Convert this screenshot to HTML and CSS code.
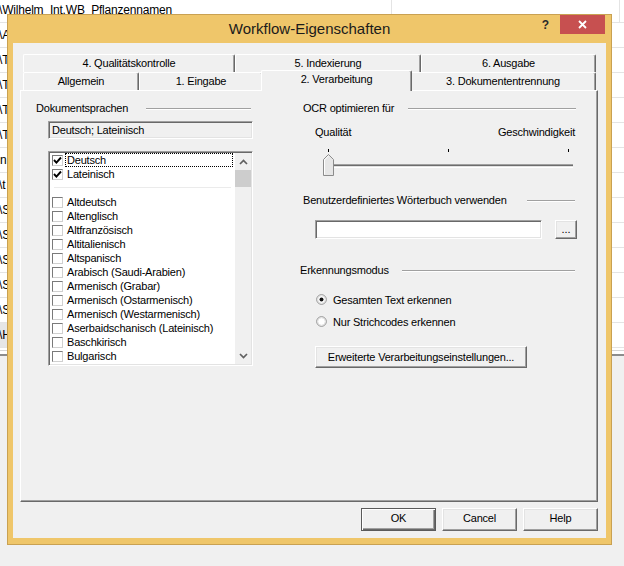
FILE: index.html
```html
<!DOCTYPE html>
<html lang="de">
<head>
<meta charset="utf-8">
<title>Workflow-Eigenschaften</title>
<link rel="stylesheet" href="styles.css">
</head>
<body>
<div class="sheet">
  <div class="rows">
    <div class="row"><div class="c1 hd">\Wilhelm_Int.WB_Pflanzennamen</div><div class="c2 hd"></div><div class="c3"></div></div>
    <div class="row b"><div class="c1">\At</div><div class="c3"></div></div>
    <div class="row b"><div class="c1">\T</div><div class="c3"></div></div>
    <div class="row b"><div class="c1">\T</div><div class="c3"></div></div>
    <div class="row b"><div class="c1">\T</div><div class="c3"></div></div>
    <div class="row b"><div class="c1">\T</div><div class="c3"></div></div>
    <div class="row b"><div class="c1 noind">n</div><div class="c3"></div></div>
    <div class="row b"><div class="c1">\t</div><div class="c3"></div></div>
    <div class="row b"><div class="c1">\S</div><div class="c3"></div></div>
    <div class="row b"><div class="c1">\S</div><div class="c3"></div></div>
    <div class="row b"><div class="c1">\S</div><div class="c3"></div></div>
    <div class="row b"><div class="c1">\S</div><div class="c3"></div></div>
    <div class="row b"><div class="c1">\S</div><div class="c3"></div></div>
    <div class="row b sel"><div class="c1">\H</div><div class="c3"></div></div>
  </div>
  <div class="sheet-line"></div>
</div>

<div class="dialog">
  <div class="titlebar">
    <div class="title">Workflow-Eigenschaften</div>
    <div class="tb-btns">
      <div class="help">?</div>
      <div class="close">
        <svg width="9" height="9" viewBox="0 0 9 9"><path d="M1 1 L8 8 M8 1 L1 8" stroke="#fff" stroke-width="1.8" fill="none"/></svg>
      </div>
    </div>
  </div>

  <div class="client">
    <div class="tabs">
      <div class="tabrow r1">
        <div class="tab">4. Qualitätskontrolle</div>
        <div class="tab">5. Indexierung</div>
        <div class="tab">6. Ausgabe</div>
      </div>
      <div class="tabrow r2">
        <div class="tab">Allgemein</div>
        <div class="tab">1. Eingabe</div>
        <div class="tab sel">2. Verarbeitung</div>
        <div class="tab">3. Dokumententrennung</div>
      </div>
    </div>

    <div class="panel">
      <div class="col-left">
        <div class="ghead"><span>Dokumentsprachen</span><span class="etch e1"></span></div>
        <div class="field sunken">Deutsch; Lateinisch</div>
        <div class="listbox sunken">
          <div class="items">
            <div class="item"><span class="cb"><svg width="9" height="9" viewBox="0 0 9 9"><path d="M1 4 L3.4 6.6 L8 1.5" stroke="#000" stroke-width="1.9" fill="none"/></svg></span><span class="lbl focus">Deutsch</span></div>
            <div class="item"><span class="cb"><svg width="9" height="9" viewBox="0 0 9 9"><path d="M1 4 L3.4 6.6 L8 1.5" stroke="#000" stroke-width="1.9" fill="none"/></svg></span><span class="lbl">Lateinisch</span></div>
            <div class="item sep"><span class="sepline"></span></div>
            <div class="item"><span class="cb"></span><span class="lbl">Altdeutsch</span></div>
            <div class="item"><span class="cb"></span><span class="lbl">Altenglisch</span></div>
            <div class="item"><span class="cb"></span><span class="lbl">Altfranzösisch</span></div>
            <div class="item"><span class="cb"></span><span class="lbl">Altitalienisch</span></div>
            <div class="item"><span class="cb"></span><span class="lbl">Altspanisch</span></div>
            <div class="item"><span class="cb"></span><span class="lbl">Arabisch (Saudi-Arabien)</span></div>
            <div class="item"><span class="cb"></span><span class="lbl">Armenisch (Grabar)</span></div>
            <div class="item"><span class="cb"></span><span class="lbl">Armenisch (Ostarmenisch)</span></div>
            <div class="item"><span class="cb"></span><span class="lbl">Armenisch (Westarmenisch)</span></div>
            <div class="item"><span class="cb"></span><span class="lbl">Aserbaidschanisch (Lateinisch)</span></div>
            <div class="item"><span class="cb"></span><span class="lbl">Baschkirisch</span></div>
            <div class="item"><span class="cb"></span><span class="lbl">Bulgarisch</span></div>
          </div>
          <div class="scrollbar">
            <div class="sb-btn"><svg width="9" height="6" viewBox="0 0 9 6"><path d="M1 5 L4.5 1.5 L8 5" stroke="#606060" stroke-width="1.7" fill="none"/></svg></div>
            <div class="sb-thumb"></div>
            <div class="sb-track"></div>
            <div class="sb-btn"><svg width="9" height="6" viewBox="0 0 9 6"><path d="M1 1 L4.5 4.5 L8 1" stroke="#606060" stroke-width="1.7" fill="none"/></svg></div>
          </div>
        </div>
      </div>

      <div class="col-right">
        <div class="ghead ind"><span>OCR optimieren für</span><span class="etch e2"></span></div>
        <div class="scale-labels"><span>Qualität</span><span>Geschwindigkeit</span></div>
        <svg class="slider" width="262" height="33" viewBox="0 0 262 33">
          <rect x="13" y="4" width="1" height="3" fill="#000"/>
          <rect x="133" y="4" width="1" height="3" fill="#000"/>
          <rect x="253" y="4" width="1" height="3" fill="#000"/>
          <rect x="13" y="19" width="245" height="1" fill="#a0a0a0"/>
          <rect x="13" y="20" width="245" height="1" fill="#6d6d6d"/>
          <rect x="13" y="21" width="245" height="1" fill="#e3e3e3"/>
          <rect x="13" y="22" width="245" height="1" fill="#ffffff"/>
          <polygon points="8.5,14.5 13.5,9.5 18.5,14.5 18.5,30.5 8.5,30.5" fill="#e6e6e6" stroke="#8c8c8c" stroke-width="1"/>
          <path d="M9.5 29.5 V14.9 L13.5 10.9" stroke="#fff" stroke-width="1" fill="none"/>
        </svg>
        <div class="ghead ind g2"><span>Benutzerdefiniertes Wörterbuch verwenden</span><span class="etch e3"></span></div>
        <div class="dictrow">
          <div class="input sunken"></div>
          <div class="btn dots">...</div>
        </div>
        <div class="ghead g3"><span>Erkennungsmodus</span><span class="etch e4"></span></div>
        <div class="radio">
          <svg width="11" height="11" viewBox="0 0 11 11"><circle cx="5.5" cy="5.5" r="4.8" fill="#fff" stroke="#8a8a8a"/><circle cx="5.5" cy="5.5" r="3.8" fill="none" stroke="#e0e0e0"/><circle cx="5.5" cy="5.5" r="2" fill="#111"/></svg>
          <span>Gesamten Text erkennen</span>
        </div>
        <div class="radio r2">
          <svg width="11" height="11" viewBox="0 0 11 11"><circle cx="5.5" cy="5.5" r="4.8" fill="#fff" stroke="#8a8a8a"/><circle cx="5.5" cy="5.5" r="3.8" fill="none" stroke="#e0e0e0"/></svg>
          <span>Nur Strichcodes erkennen</span>
        </div>
        <div class="btn wide">Erweiterte Verarbeitungseinstellungen...</div>
      </div>
    </div>

    <div class="footer">
      <div class="btn fbtn default">OK</div>
      <div class="btn fbtn">Cancel</div>
      <div class="btn fbtn">Help</div>
    </div>
  </div>
</div>
</body>
</html>
```
FILE: styles.css
```css
* { box-sizing: border-box; margin: 0; padding: 0; }
html, body { width: 624px; height: 566px; overflow: hidden; }
body {
  position: relative;
  background: #f0f0f0;
  font-family: "Liberation Sans", Arial, sans-serif;
  font-size: 11px;
  color: #000;
}

/* background spreadsheet */
.sheet {
  background: #fff;
  height: 356px;
  border-bottom: 2px solid #8c8c8c;
  overflow: hidden;
}
.rows { margin-top: -2px; }
.row {
  display: grid;
  grid-template-columns: 392px 228px 1fr;
  height: 25px;
  border-bottom: 1px solid #e4e4e4;
  font-size: 12px;
  line-height: 24px;
  letter-spacing: -0.2px;
}
.row.b { grid-template-columns: 7px 1fr; }
.c1 { text-indent: -1px; white-space: nowrap; overflow: hidden; }
.c1.noind { text-indent: 0; }
.hd { border-right: 1px solid #e4e4e4; }
.row.sel .c1 { background: #e6e6e6; }
.sheet-line { margin-top: 2px; border-top: 1px solid #d6d6d6; }

/* dialog window */
.dialog {
  position: absolute;
  left: 7px;
  top: 14px;
  width: 605px;
  height: 531px;
  background: #efc66a;
  border: 1px solid #c9a152;
  display: flex;
  flex-direction: column;
}
.titlebar {
  height: 28px;
  display: grid;
  grid-template-columns: 1fr auto 1fr;
  align-items: start;
}
.title {
  grid-column: 2;
  font-size: 15px;
  line-height: 28px;
  color: #1b1b1b;
}
.tb-btns {
  grid-column: 3;
  justify-self: end;
  display: flex;
  align-items: flex-start;
  margin-right: 6px;
}
.help {
  font-weight: bold;
  font-size: 12px;
  line-height: 14px;
  margin-top: 3px;
  margin-right: 11px;
  color: #2a2a2a;
}
.close {
  width: 45px;
  height: 19px;
  background: #c75050;
  display: flex;
  align-items: center;
  justify-content: center;
}

.client {
  flex: 1;
  margin: 0 5px 6px 5px;
  background: #f0f0f0;
  padding: 11px 8px 0 7px;
  letter-spacing: -0.2px;
}

/* tabs */
.tabs { margin-left: 3px; width: 573px; }
.tabrow { display: grid; height: 18px; }
.tabrow.r1 { grid-template-columns: 212px 186px 175px; }
.tabrow.r2 { grid-template-columns: 116px 124px 147px 186px; }
.tab {
  height: 18px;
  background: #f0f0f0;
  border-top: 1px solid #fff;
  border-left: 1px solid #fff;
  border-right: 1px solid #696969;
  box-shadow: inset -1px 0 #a0a0a0;
  border-radius: 2px 2px 0 0;
  text-align: center;
  padding-top: 2px;
  line-height: 13px;
  white-space: nowrap;
}
.tab.sel {
  position: relative;
  z-index: 1;
  height: 21px;
  margin: -2px -2px 0 -2px;
}

.panel {
  height: 412px;
  border-top: 1px solid #fff;
  border-left: 1px solid #fff;
  border-right: 1px solid #696969;
  border-bottom: 1px solid #696969;
  box-shadow: inset -1px -1px #a0a0a0;
  padding: 11px 0 0 15px;
  display: flex;
  align-items: flex-start;
}
.col-left { width: 217px; }
.col-right { width: 277px; margin-left: 47px; }

.ghead {
  display: flex;
  align-items: flex-start;
  height: 13px;
  line-height: 13px;
  white-space: nowrap;
}
.ghead.ind span:first-child { padding-left: 3px; }
.etch {
  margin-left: auto;
  margin-top: 6px;
  height: 2px;
  border-top: 1px solid #a0a0a0;
  border-bottom: 1px solid #fff;
}
.e1 { width: 105px; margin-right: 2px; }
.e2 { width: 168px; margin-right: 1px; }
.e3 { width: 48px; margin-right: 2px; }
.e4 { width: 173px; margin-right: 2px; }

.sunken {
  border: 1px solid;
  border-color: #a0a0a0 #fff #fff #a0a0a0;
  box-shadow: inset 1px 1px #696969, inset -1px -1px #e3e3e3;
}
.field {
  margin: 6px 0 0 12px;
  width: 205px;
  height: 18px;
  padding: 2px 0 0 3px;
  line-height: 13px;
  background: #f0f0f0;
}
.listbox {
  margin: 12px 0 0 12px;
  width: 205px;
  height: 215px;
  padding: 1px;
  background: #fff;
  display: flex;
  overflow: hidden;
}
.items { flex: 1; }
.item { display: flex; align-items: flex-start; height: 14px; }
.cb {
  width: 11px;
  height: 11px;
  margin: 2px 0 0 2px;
  background: #fff;
  border: 1px solid;
  border-color: #7a7a7a #d0d0d0 #d0d0d0 #7a7a7a;
  display: flex;
  align-items: center;
  justify-content: center;
  flex: none;
}
.lbl {
  height: 14px;
  margin-left: 2px;
  padding-left: 1px;
  border: 1px dotted transparent;
  line-height: 12px;
  white-space: nowrap;
}
.lbl.focus { border-color: #000; width: 168px; }
.sepline {
  display: block;
  margin: 6px 4px 0 4px;
  width: 177px;
  border-top: 1px solid #ebebeb;
}
.scrollbar {
  width: 16px;
  background: #f0f0f0;
  display: flex;
  flex-direction: column;
}
.sb-btn { height: 17px; display: flex; align-items: center; justify-content: center; }
.sb-thumb { height: 17px; background: #cdcdcd; }
.sb-track { flex: 1; }

/* right column */
.scale-labels {
  margin: 11px 2px 0 15px;
  display: flex;
  justify-content: space-between;
  line-height: 13px;
}
.slider { display: block; margin: 6px 0 0 15px; }
.g2 { margin-top: 16px; }
.dictrow { display: flex; margin: 13px 0 0 15px; }
.input { width: 227px; height: 19px; background: #fff; }

.btn {
  background: #f0f0f0;
  border: 1px solid;
  border-color: #fff #696969 #696969 #fff;
  box-shadow: inset -1px -1px #a0a0a0, inset 1px 1px #e3e3e3;
  text-align: center;
  white-space: nowrap;
}
.dots { width: 22px; height: 19px; margin-left: 13px; line-height: 17px; letter-spacing: 0; }

.g3 { margin-top: 25px; }
.radio {
  display: flex;
  align-items: flex-start;
  height: 13px;
  line-height: 13px;
  margin: 17px 0 0 16px;
}
.radio svg { flex: none; margin-right: 6px; }
.radio.r2 { margin-top: 9px; }
.wide {
  width: 212px;
  height: 22px;
  margin: 17px 0 0 15px;
  line-height: 20px;
}

.footer {
  display: flex;
  justify-content: flex-end;
  gap: 6px;
  margin-top: 6px;
}
.fbtn {
  width: 75px;
  height: 23px;
  line-height: 19px;
  padding-bottom: 2px;
}
.fbtn.default {
  border-color: #5a5a5a;
  box-shadow: inset 1px 1px #fff, inset -1px -1px #696969, inset -2px -2px #a0a0a0;
}
```
